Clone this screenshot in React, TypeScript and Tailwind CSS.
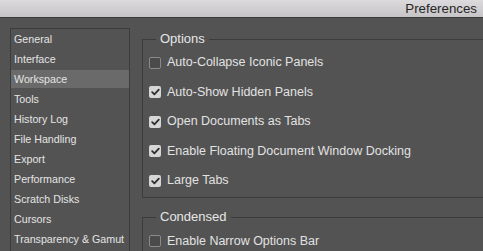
import React from "react";

const items = [
  "General",
  "Interface",
  "Workspace",
  "Tools",
  "History Log",
  "File Handling",
  "Export",
  "Performance",
  "Scratch Disks",
  "Cursors",
  "Transparency & Gamut",
];

function Check({ checked, label }: { checked: boolean; label: string }) {
  return (
    <div className="flex h-[29.5px] items-center pl-[6px]">
      {checked ? (
        <div className="flex h-[12px] w-[12px] items-center justify-center rounded-[2px] bg-[#d6d6d6]">
          <svg width="9" height="8" viewBox="0 0 9 8">
            <path d="M1.2 4.2 L3.4 6.3 L7.8 1.6" fill="none" stroke="#2e2e2e" strokeWidth="1.8" strokeLinecap="round" strokeLinejoin="round" />
          </svg>
        </div>
      ) : (
        <div className="h-[12px] w-[12px] rounded-[2px] border border-[#8a8a8a] bg-[#4b4b4b]" />
      )}
      <span className="ml-[6px] text-[12.5px] text-[#e2e2e2]">{label}</span>
    </div>
  );
}

function Group({ title, children, className }: { title: string; children: React.ReactNode; className?: string }) {
  return (
    <div className={"w-[400px] border border-r-0 border-[#3c3c3c] " + (className ?? "")}>
      <span className="-mt-[10px] ml-[13px] block w-fit bg-[#535353] px-[4px] text-[13px] leading-[18px] text-[#e6e6e6]">
        {title}
      </span>
      {children}
    </div>
  );
}

export default function App() {
  return (
    <div
      className="h-[251px] w-[483px] overflow-hidden bg-[#535353]"
      style={{ fontFamily: '"Liberation Sans", Arial, sans-serif' }}
    >
      <div className="flex h-[18px] items-center justify-end border-b border-[#3a3a3a] bg-gradient-to-b from-[#dcdadc] to-[#c6c4c6] pr-[6px]">
        <span className="text-[13.3px] text-[#262626]">Preferences</span>
      </div>
      <div className="flex pl-[10px] pt-[10px]">
        <div className="h-[240px] w-[120px] shrink-0 border border-[#3c3c3c] border-b-0 pt-[1px]">
          {items.map((it) => (
            <div
              key={it}
              className={
                "mb-[2px] flex h-[18px] items-center pl-[3px] text-[10.7px] text-[#e4e4e4] " +
                (it === "Workspace" ? "bg-[#6a6a6a]" : "")
              }
            >
              {it}
            </div>
          ))}
        </div>
        <div className="ml-[12px] flex flex-col pt-[11px]">
          <Group title="Options" className="pb-[1px]">
            <Check checked={false} label="Auto-Collapse Iconic Panels" />
            <Check checked label="Auto-Show Hidden Panels" />
            <Check checked label="Open Documents as Tabs" />
            <Check checked label="Enable Floating Document Window Docking" />
            <Check checked label="Large Tabs" />
          </Group>
          <Group title="Condensed" className="mt-[19px]">
            <div className="mt-[1px]">
              <Check checked={false} label="Enable Narrow Options Bar" />
            </div>
          </Group>
        </div>
      </div>
    </div>
  );
}
